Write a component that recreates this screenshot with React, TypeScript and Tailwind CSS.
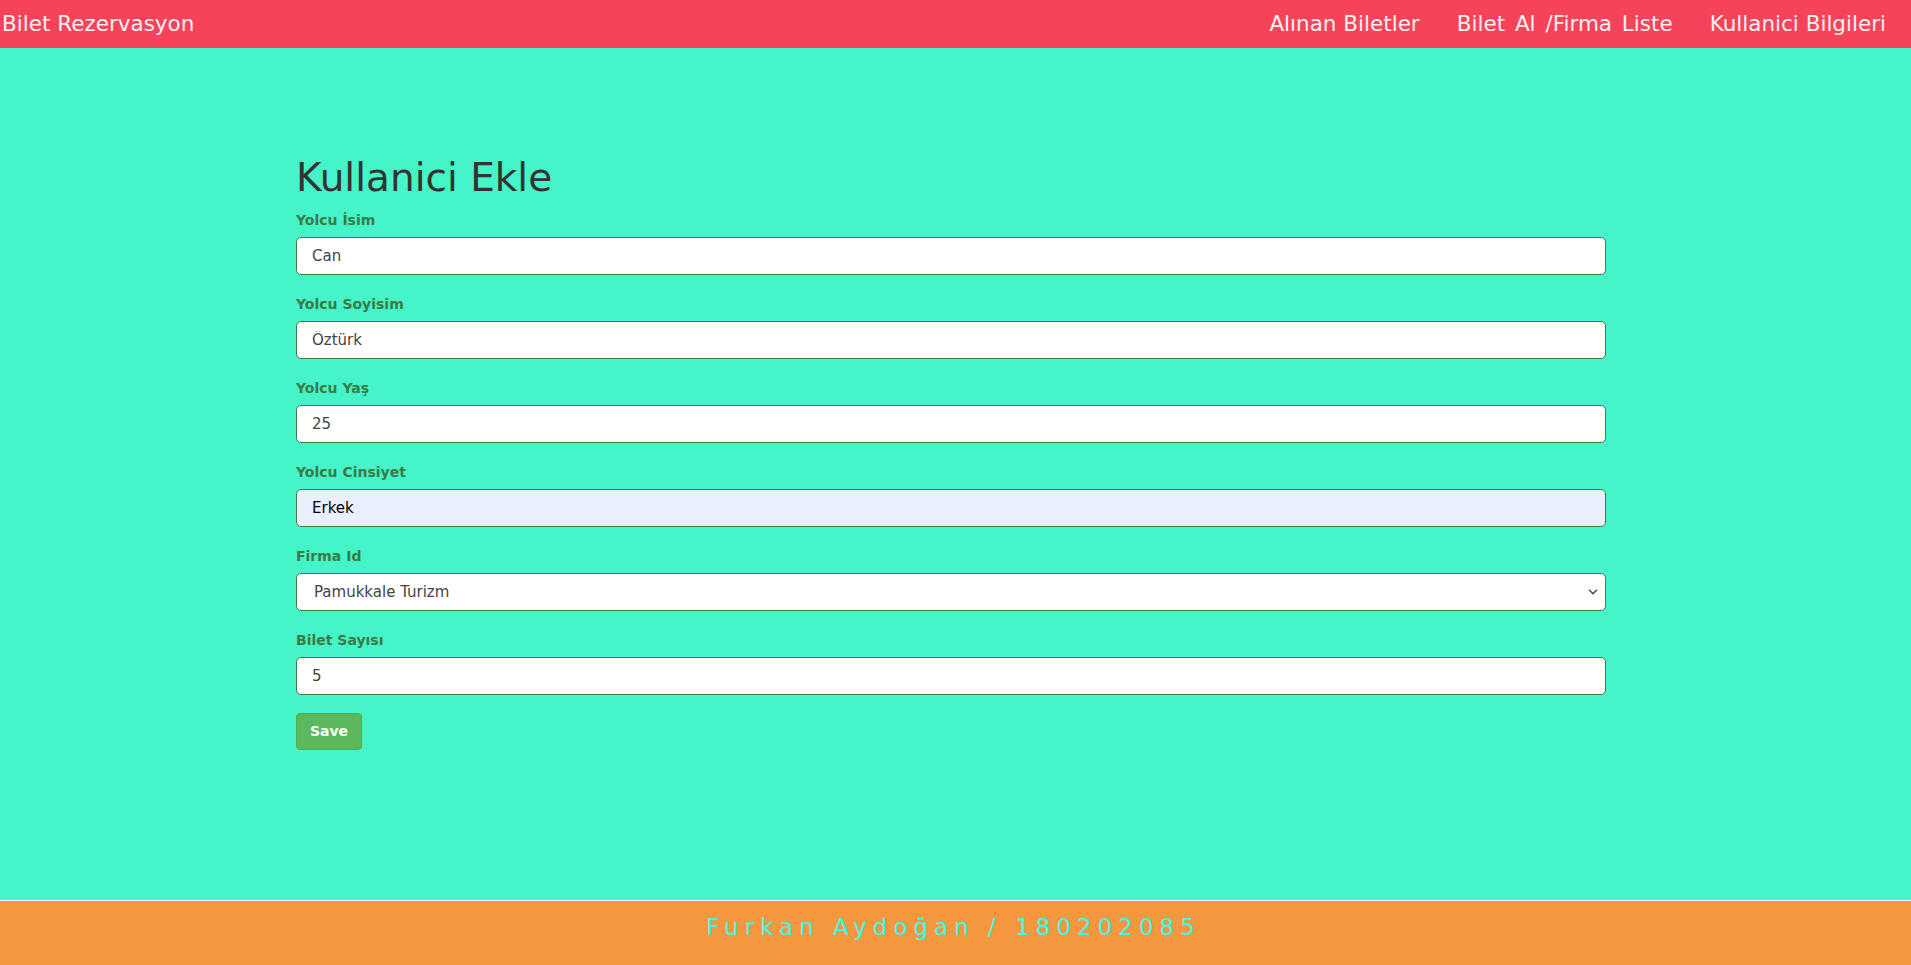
import { ChevronDown } from "lucide-react";

const fields = [
  { label: "Yolcu İsim", value: "Can" },
  { label: "Yolcu Soyisim", value: "Öztürk" },
  { label: "Yolcu Yaş", value: "25" },
  { label: "Yolcu Cinsiyet", value: "Erkek", filled: true },
];

const Navbar = () => {
  return (
    <nav className="flex h-[48px] items-center justify-between bg-[#f64359] pl-[2px] pr-[25px] text-[21.5px] text-[#fdf0f2]">
      <a className="cursor-pointer">Bilet Rezervasyon</a>
      <div className="flex items-center gap-[37px]">
        <a className="cursor-pointer">Alınan Biletler</a>
        <a className="cursor-pointer [word-spacing:3px]">Bilet Al /Firma Liste</a>
        <a className="cursor-pointer">Kullanici Bilgileri</a>
      </div>
    </nav>
  );
};

const Field = ({ label, children }: { label: string; children: React.ReactNode }) => {
  return (
    <div className="mb-[19px] flex flex-col">
      <label className="mb-[7px] h-[20px] text-[14px] font-bold leading-[20px] text-[#3b7a44]">
        {label}
      </label>
      {children}
    </div>
  );
};

const inputCls =
  "h-[38px] w-full rounded-[5px] border border-[#3f7d46] pl-[15px] text-[15px] outline-none";

const App = () => {
  return (
    <div className="flex min-h-[965px] flex-col bg-[#45f5c9] font-['DejaVu_Sans',sans-serif]">
      <Navbar />
      <main className="flex-1 pt-[107px]">
        <div className="ml-[296px] w-[1310px]">
          <h1 className="mb-[8px] text-[39px] leading-[1.2] text-[#333]">Kullanici Ekle</h1>
          {fields.map((f) => (
            <Field key={f.label} label={f.label}>
              <input
                readOnly
                value={f.value}
                className={
                  inputCls +
                  (f.filled ? " bg-[#e8f0fe] text-black" : " bg-white text-[#444]")
                }
              />
            </Field>
          ))}
          <Field label="Firma Id">
            <div className="relative">
              <select className="h-[38px] w-full appearance-none rounded-[5px] border border-[#3f7d46] bg-white pl-[17px] text-[15px] text-[#444] outline-none">
                <option>Pamukkale Turizm</option>
              </select>
              <ChevronDown
                size={14}
                strokeWidth={3}
                className="pointer-events-none absolute right-[6px] top-[12px] text-[#555]"
              />
            </div>
          </Field>
          <Field label="Bilet Sayısı">
            <input readOnly value="5" className={inputCls + " bg-white text-[#444]"} />
          </Field>
          <button className="-mt-[1px] h-[37px] w-[66px] rounded-[4px] border border-[#4cae4c] bg-[#5cb85c] text-[14px] font-bold text-white">
            Save
          </button>
        </div>
      </main>
      <footer className="flex h-[65px] items-center justify-center border-t border-white bg-[#f5973f]">
        <span className="pb-[12px] pr-[4px] text-[23px] tracking-[6px] text-[#3ff7ea]">
          Furkan Aydoğan / 180202085
        </span>
      </footer>
    </div>
  );
};

export default App;
